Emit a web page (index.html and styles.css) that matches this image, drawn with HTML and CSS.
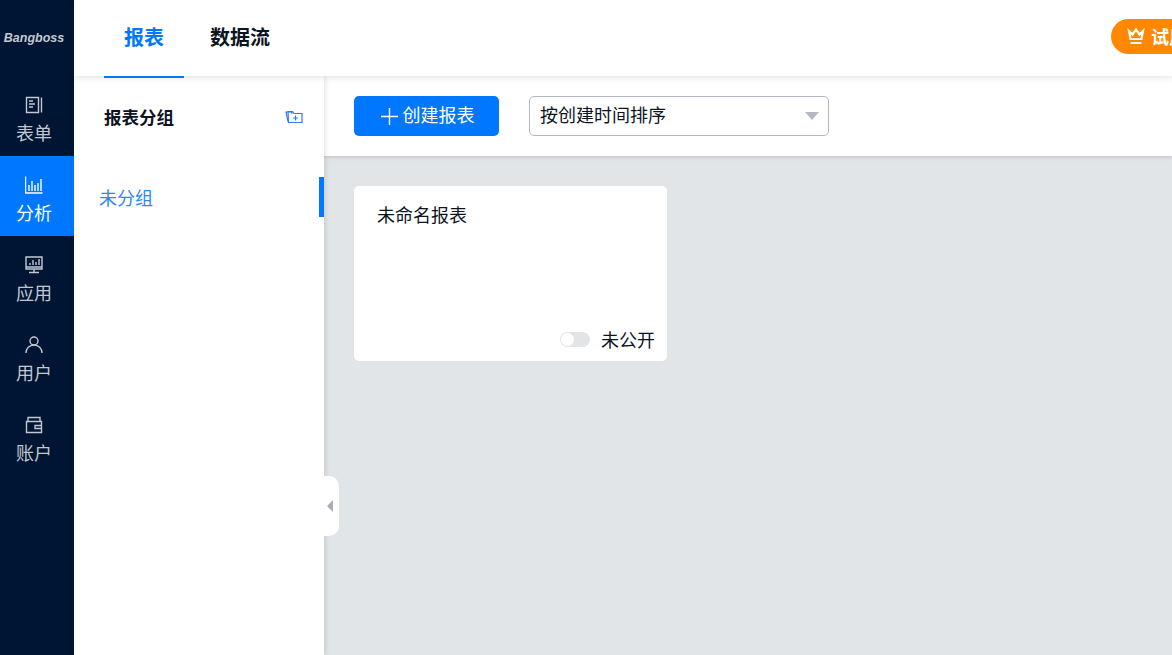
FILE: index.html
```html
<!DOCTYPE html>
<html lang="zh-CN">
  <head>
    <meta charset="UTF-8" />
    <title>报表</title>
    <link rel="stylesheet" href="styles.css">
  </head>
  <body>
    <div class="app">
      <aside class="side-nav">
        <div class="logo">Bangboss</div>
        <a class="nav-item" href="#">
          <svg class="nav-icon" viewBox="0 0 18 18"><path d="M1.500 1.500h12v15h-12zM16.500 1.500v15M4 5h4M4 8h6M4 11h4" /></svg>
          <span>表单</span>
        </a>
        <a class="nav-item active" href="#">
          <svg class="nav-icon" viewBox="0 0 18 18"><path d="M.5 .5v16.500h17M4 15V9M7 15V5M10 15V9M13 15V7M16 15V3" /></svg>
          <span>分析</span>
        </a>
        <a class="nav-item" href="#">
          <svg class="nav-icon" viewBox="0 0 18 18"><path d="M1 1h16v12H1zM1 11h16M9 13v3M4 16.500h10M5 9V7M8 9V4M11 9V6M14 9V3" /></svg>
          <span>应用</span>
        </a>
        <a class="nav-item" href="#">
          <svg class="nav-icon" viewBox="0 0 18 18"><circle cx="9" cy="5" r="4" /><path d="M1 17c0-4.500 3.500-8 8-8s8 3.500 8 8" /></svg>
          <span>用户</span>
        </a>
        <a class="nav-item" href="#">
          <svg class="nav-icon" viewBox="0 0 18 18"><path d="M1.500 5.500h15v11h-15zM3 5.500V1.500h12v4M10 9.500h6.500v3H10z" /></svg>
          <span>账户</span>
        </a>
      </aside>

      <div class="content">
        <header class="top-bar">
          <nav class="tabs">
            <a class="tab active" href="#">报表</a>
            <a class="tab" href="#">数据流</a>
          </nav>
          <a class="trial-btn" href="#">
            <svg class="crown" viewBox="0 0 18 17"><path d="M2 3l3.500 3.500L9 1.500l3.500 5L16 3l-1.500 8h-11zM3.500 15h11" /></svg>
            试用
          </a>
        </header>

        <div class="workspace">
          <section class="group-panel">
            <div class="group-head">
              <h3>报表分组</h3>
              <svg class="folder-icon" viewBox="0 0 18 15"><path d="M3 12.500L1 3h5l1.500 1.500" /><path d="M3 2.500h4.500l1.500 2h8v9H3.500zM10.500 6.500v5M8 9h5" /></svg>
            </div>
            <div class="group-item">未分组</div>
            <button class="collapse-btn" type="button"><i></i></button>
          </section>

          <main class="main">
            <div class="toolbar">
              <button class="create-btn" type="button">
                <svg class="plus" viewBox="0 0 16 16"><path d="M8 0v16M0 8h16" /></svg>
                创建报表
              </button>
              <div class="sort-select">
                <span>按创建时间排序</span>
                <i class="caret"></i>
              </div>
            </div>
            <div class="report-list">
              <div class="report-card">
                <div class="report-name">未命名报表</div>
                <div class="report-foot">
                  <span class="switch"></span>
                  <span>未公开</span>
                </div>
              </div>
            </div>
          </main>
        </div>
      </div>
    </div>
  </body>
</html>
```

FILE: styles.css
```css
* {
  box-sizing: border-box;
}

body {
  margin: 0;
  font-family: "Noto Sans CJK SC", "Liberation Sans", sans-serif;
  font-size: 18px;
  color: #0c1423;
  background: #fff;
  overflow: hidden;
}

a {
  text-decoration: none;
}

.app {
  display: flex;
  width: 1172px;
  height: 655px;
  overflow: hidden;
}

.side-nav {
  flex: 0 0 74px;
  background: #001533;
}

.logo {
  height: 76px;
  display: flex;
  align-items: center;
  justify-content: center;
  padding-right: 6px;
  font-family: "Liberation Sans", sans-serif;
  font-size: 12.500px;
  font-style: italic;
  font-weight: bold;
  color: #c4c9d2;
}

.nav-item {
  height: 80px;
  display: flex;
  flex-direction: column;
  align-items: center;
  padding: 20px 6px 0 0;
  color: #c2c7cf;
  line-height: 24px;
}

.nav-item.active {
  background: #0077ff;
  color: #fff;
}

.nav-icon {
  width: 18px;
  height: 18px;
  margin-bottom: 6px;
  fill: none;
  stroke: currentColor;
  stroke-width: 1.400;
}

.content {
  flex: 1;
  min-width: 0;
  display: flex;
  flex-direction: column;
}

.top-bar {
  height: 76px;
  flex: none;
  display: flex;
  align-items: center;
  position: relative;
  z-index: 3;
  padding-left: 30px;
  background: #fff;
  box-shadow: 0 2px 6px rgba(30, 40, 60, 0.12);
}

.tabs {
  display: flex;
  height: 100%;
}

.tab {
  height: 78px;
  width: 80px;
  display: flex;
  align-items: center;
  justify-content: center;
  margin-right: 16px;
  padding-bottom: 4px;
  font-size: 20px;
  font-weight: bold;
  color: #0c1423;
  border-bottom: 2px solid transparent;
}

.tab.active {
  color: #0077ff;
  border-bottom-color: #0077ff;
}

.trial-btn {
  flex: none;
  display: flex;
  align-items: center;
  gap: 6px;
  width: 100px;
  height: 35px;
  margin: 0 -39px 4px auto;
  padding-left: 16px;
  border-radius: 18px;
  background: #ff8800;
  color: #fff;
  font-size: 18px;
  font-weight: bold;
  white-space: nowrap;
}

.crown {
  width: 18px;
  height: 17px;
  fill: none;
  stroke: #fff;
  stroke-width: 2.200;
}

.workspace {
  flex: 1;
  display: flex;
  min-height: 0;
}

.group-panel {
  flex: 0 0 250px;
  position: relative;
  z-index: 2;
  background: #fff;
  box-shadow: 1px 0 5px rgba(30, 40, 60, 0.15);
}

.group-head {
  display: flex;
  align-items: center;
  justify-content: space-between;
  height: 82px;
  padding: 0 21px 2px 30px;
}

.group-head h3 {
  margin: 0;
  font-size: 17.500px;
  font-weight: bold;
}

.folder-icon {
  width: 18px;
  height: 15px;
  fill: none;
  stroke: #2b7cf6;
  stroke-width: 1.200;
}

.group-item {
  height: 40px;
  margin-top: 19px;
  padding-left: 25px;
  line-height: 40px;
  color: #2f87f5;
  border-right: 5px solid #0077ff;
}

.collapse-btn {
  position: absolute;
  left: 250px;
  top: 400px;
  width: 15px;
  height: 60px;
  border: 0;
  border-radius: 0 10px 10px 0;
  background: #fff;
  display: flex;
  align-items: center;
  padding: 0 0 0 3px;
}

.collapse-btn i {
  border: 6px solid transparent;
  border-left: 0;
  border-right: 6px solid #a9afb8;
}

.main {
  flex: 1;
  min-width: 0;
  display: flex;
  flex-direction: column;
  background: #e2e5e8;
}

.toolbar {
  height: 80px;
  flex: none;
  display: flex;
  align-items: center;
  gap: 30px;
  padding-left: 30px;
  background: #fff;
  box-shadow: 0 1px 4px rgba(30, 40, 60, 0.2);
}

.create-btn {
  width: 145px;
  height: 40px;
  display: flex;
  align-items: center;
  justify-content: center;
  gap: 5px;
  padding: 0 0 5px 2px;
  border: 0;
  border-radius: 5px;
  background: #0077ff;
  color: #fff;
  font-family: inherit;
  font-size: 18px;
}

.plus {
  width: 17px;
  height: 17px;
  margin-top: 5px;
  fill: none;
  stroke: #fff;
  stroke-width: 1.300;
}

.sort-select {
  width: 300px;
  height: 40px;
  display: flex;
  align-items: center;
  justify-content: space-between;
  padding: 0 9px 4px 10px;
  border: 1px solid #b4b8c0;
  border-radius: 5px;
  background: #fff;
}

.caret {
  margin-top: 4px;
  border: 7px solid transparent;
  border-top: 8px solid #b4b8c0;
  border-bottom: 0;
}

.report-list {
  padding: 30px;
}

.report-card {
  width: 313px;
  height: 175px;
  display: flex;
  flex-direction: column;
  justify-content: space-between;
  padding: 15px 12px 9px 23px;
  border-radius: 5px;
  background: #fff;
}

.report-foot {
  display: flex;
  align-items: center;
  justify-content: flex-end;
  gap: 11px;
}

.switch {
  width: 30px;
  height: 15px;
  position: relative;
  border-radius: 8px;
  background: #e2e5e8;
}

.switch::before {
  content: "";
  position: absolute;
  left: 1px;
  top: 1px;
  width: 13px;
  height: 13px;
  border-radius: 50%;
  background: #fff;
}
```
